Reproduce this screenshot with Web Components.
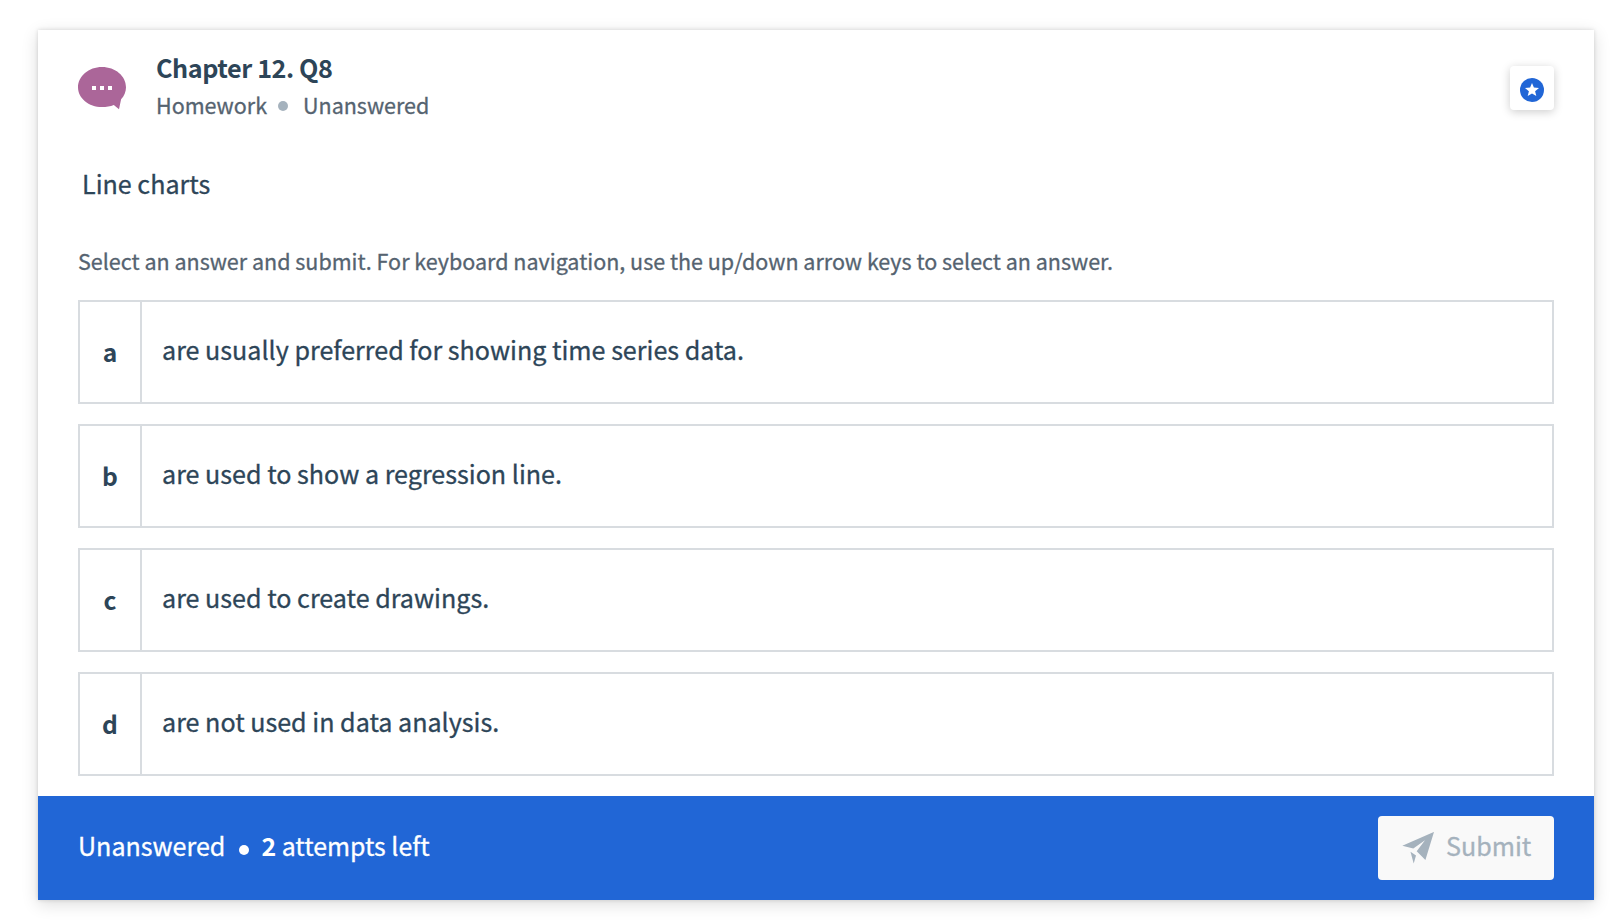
<!DOCTYPE html>
<html lang="en">
<head>
<meta charset="utf-8">
<title>Chapter 12. Q8</title>
<style>
    body {
        margin: 0;
        padding: 30px 22px 22px 38px;
        background: #fff;
        color: #2d4558;
        font: 25.1px/36px 'Noto Sans CJK SC', sans-serif;
        -webkit-text-stroke: .3px;
    }
</style>
</head>
<body>
<question-card>
    <question-header slot='header' name='Chapter 12. Q8' kind='Homework' status='Unanswered'></question-header>
    <span slot='prompt'>Line charts</span>
    <span slot='hint'>Select an answer and submit. For keyboard navigation, use the up/down arrow keys to select an answer.</span>
    <answer-option letter='a'>are usually preferred for showing time series data.</answer-option>
    <answer-option letter='b'>are used to show a regression line.</answer-option>
    <answer-option letter='c'>are used to create drawings.</answer-option>
    <answer-option letter='d'>are not used in data analysis.</answer-option>
    <question-footer slot='footer' status='Unanswered' attempts='2'></question-footer>
</question-card>

<script>
const cardTemplate = document.createElement('template')
cardTemplate.innerHTML = `
<style>
    :host {
        display: block;
        height: 870px;
        background: #fff;
        box-shadow: 0 0 4px rgba(0, 0, 0, .14), 0 4px 16px rgba(0, 0, 0, .14);
    }
    .card {
        display: flex;
        flex-direction: column;
        height: 100%;
    }
    .body {
        flex: 1;
        padding: 0 40px;
    }
    .prompt {
        padding: 36px 0 0 4px;
    }
    .hint {
        margin: 42px 0 21px;
        color: #556370;
        font-size: 21.5px;
        line-height: 36px;
        white-space: nowrap;
    }
    .answers {
        display: grid;
        gap: 20px;
    }
</style>
<div class='card'>
    <slot name='header'></slot>
    <div class='body'>
        <div class='prompt'><slot name='prompt'></slot></div>
        <div class='hint'><slot name='hint'></slot></div>
        <div class='answers'><slot></slot></div>
    </div>
    <slot name='footer'></slot>
</div>
`

class QuestionCard extends HTMLElement {
    constructor() {
        super()
        this.attachShadow({ mode: 'open' })
        this.shadowRoot.appendChild(cardTemplate.content.cloneNode(true))
    }
}

const headerTemplate = document.createElement('template')
headerTemplate.innerHTML = `
<style>
    :host {
        display: flex;
        align-items: flex-start;
        height: 82px;
        padding: 17px 40px 0;
    }
    .bubble {
        width: 48px;
        height: 44px;
        margin-top: 20px;
    }
    .text {
        flex: 1;
        margin-left: 30px;
        white-space: nowrap;
    }
    h3 {
        margin: 0 0 2px;
        font-size: 25.2px;
        line-height: 40px;
        font-weight: 700;
        letter-spacing: -.42px;
        -webkit-text-stroke: 0;
    }
    .info {
        display: flex;
        align-items: center;
        line-height: 32px;
        font-size: 21.5px;
        color: #556370;
    }
    .dot {
        width: 10px;
        height: 10px;
        margin: 2px 15px 0 11px;
        border-radius: 50%;
        background: #a5b2bd;
    }
    button {
        display: grid;
        place-items: center;
        width: 44px;
        height: 44px;
        margin: 19px 0 0;
        padding: 4px 0 0;
        border: 0;
        border-radius: 4px;
        background: #fff;
        box-shadow: 0 2px 10px rgba(0, 0, 0, .2);
    }
    button svg {
        display: block;
    }
</style>
<svg class='bubble' viewBox='0 0 48 44'>
    <path fill='#ab6699' d='M24 0C37.3 0 48 9 48 20.2c0 4.6-1.8 8.7-4.9 12L41 42.3 35.8 38C32.3 39.4 28.3 40 24 40 10.7 40 0 31.2 0 20.2S10.7 0 24 0z'/>
    <path fill='#fff' d='M14 19h4v4h-4zM22 19h4v4h-4zM30 19h4v4h-4z'/>
</svg>
<div class='text'>
    <h3></h3>
    <div class='info'>
        <span class='kind'></span>
        <span class='dot'></span>
        <span class='status'></span>
    </div>
</div>
<button aria-label='Bookmark'>
    <svg width='24' height='24' viewBox='0 0 24 24'>
        <circle cx='12' cy='12' r='12' fill='#2166d6'/>
        <path fill='#fff' d='M12 4.9l1.9 4.7 5.1.4-3.9 3.2 1.2 4.9-4.3-2.6-4.3 2.6 1.2-4.9L5 10l5.1-.4z'/>
    </svg>
</button>
`

class QuestionHeader extends HTMLElement {
    constructor() {
        super()
        this.attachShadow({ mode: 'open' })
        this.shadowRoot.appendChild(headerTemplate.content.cloneNode(true))
    }

    connectedCallback() {
        this.shadowRoot.querySelector('h3').textContent = this.getAttribute('name')
        this.shadowRoot.querySelector('.kind').textContent = this.getAttribute('kind')
        this.shadowRoot.querySelector('.status').textContent = this.getAttribute('status')
    }
}

const optionTemplate = document.createElement('template')
optionTemplate.innerHTML = `
<style>
    :host {
        display: flex;
        box-sizing: border-box;
        height: 104px;
        border: 2px solid #d8dce0;
        cursor: pointer;
    }
    .letter {
        display: flex;
        align-items: center;
        justify-content: center;
        box-sizing: border-box;
        width: 62px;
        padding-bottom: 3px;
        border-right: 2px solid #d8dce0;
        font-size: 24.6px;
        font-weight: 700;
        -webkit-text-stroke: 0;
    }
    .answer {
        display: flex;
        align-items: center;
        padding: 0 20px 7px;
        white-space: nowrap;
    }
</style>
<div class='letter'></div>
<div class='answer'><slot></slot></div>
`

class AnswerOption extends HTMLElement {
    constructor() {
        super()
        this.attachShadow({ mode: 'open' })
        this.shadowRoot.appendChild(optionTemplate.content.cloneNode(true))
    }

    connectedCallback() {
        this.shadowRoot.querySelector('.letter').textContent = this.getAttribute('letter')
    }
}

const footerTemplate = document.createElement('template')
footerTemplate.innerHTML = `
<style>
    :host {
        display: flex;
        align-items: center;
        justify-content: space-between;
        height: 104px;
        padding: 0 40px;
        background: #2166d6;
        color: #fff;
    }
    .state {
        display: flex;
        align-items: center;
        padding-bottom: 7px;
        white-space: nowrap;
    }
    .dot {
        width: 10px;
        height: 10px;
        margin: 11px 12px 0 14px;
        border-radius: 50%;
        background: #fff;
    }
    .left {
        font-size: 24.9px;
    }
    .attempts {
        -webkit-text-stroke: 0;
    }
    button {
        display: flex;
        align-items: center;
        box-sizing: border-box;
        width: 176px;
        height: 64px;
        padding: 0 0 0 24px;
        border: 0;
        border-radius: 4px;
        background: #f9f9f9;
        color: #a5b2bd;
        font: inherit;
    }
    button span {
        padding-bottom: 7px;
    }
    svg {
        flex: none;
        margin-right: 12px;
    }
</style>
<div class='state'>
    <span class='status'></span>
    <span class='dot'></span>
    <span class='left'><b class='attempts'></b> attempts left</span>
</div>
<button disabled>
    <svg width='32' height='32' viewBox='0 0 32 32' fill='#a5b2bd'>
        <path d='M32-.1L.3 13.7l11 2.8L23 8.2 14.7 19.2 23.4 28z'/>
        <path d='M8.5 19.7L14 23.4 11.7 31.4z'/>
    </svg>
    <span>Submit</span>
</button>
`

class QuestionFooter extends HTMLElement {
    constructor() {
        super()
        this.attachShadow({ mode: 'open' })
        this.shadowRoot.appendChild(footerTemplate.content.cloneNode(true))
    }

    connectedCallback() {
        this.shadowRoot.querySelector('.status').textContent = this.getAttribute('status')
        this.shadowRoot.querySelector('.attempts').textContent = this.getAttribute('attempts')
    }
}

window.customElements.define('question-card', QuestionCard)
window.customElements.define('question-header', QuestionHeader)
window.customElements.define('answer-option', AnswerOption)
window.customElements.define('question-footer', QuestionFooter)
</script>
</body>
</html>
